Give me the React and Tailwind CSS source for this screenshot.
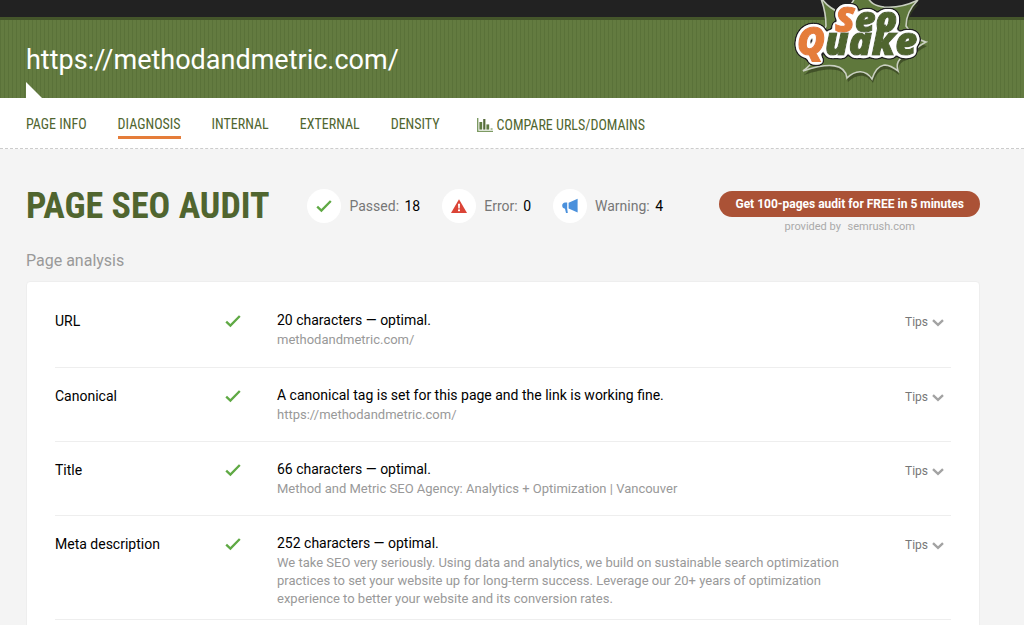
import React from "react";

const navItems = [
  { label: "Page info", active: false },
  { label: "Diagnosis", active: true },
  { label: "Internal", active: false },
  { label: "External", active: false },
  { label: "Density", active: false },
];

const rows = [
  {
    name: "URL",
    result: "20 characters — optimal.",
    detail: "methodandmetric.com/",
  },
  {
    name: "Canonical",
    result: "A canonical tag is set for this page and the link is working fine.",
    detail: "https://methodandmetric.com/",
  },
  {
    name: "Title",
    result: "66 characters — optimal.",
    detail: "Method and Metric SEO Agency: Analytics + Optimization | Vancouver",
  },
  {
    name: "Meta description",
    result: "252 characters — optimal.",
    detail:
      "We take SEO very seriously. Using data and analytics, we build on sustainable search optimization practices to set your website up for long-term success. Leverage our 20+ years of optimization experience to better your website and its conversion rates.",
  },
];

function CheckIcon() {
  return (
    <svg className="w-4 h-4" viewBox="0 0 16 16" fill="none" aria-hidden="true">
      <path d="M1.2 8.6 5.4 12.6 14.8 3" stroke="#5fa944" strokeWidth="2.3" />
    </svg>
  );
}

function ErrorIcon() {
  return (
    <svg className="w-4 h-4" viewBox="0 0 16 16" aria-hidden="true">
      <path d="M8 1.2 16 15H0Z" fill="#db4437" />
      <path d="M7 5.8h2l-.3 4.6H7.3Z" fill="#fff" />
      <rect x="7" y="11.4" width="2" height="1.8" fill="#fff" />
    </svg>
  );
}

function WarningIcon() {
  return (
    <svg className="w-4 h-4" viewBox="0 0 16 16" fill="#4a90dc" aria-hidden="true">
      <path d="M15.6.8V14.4L6.6 10.6V4.8Z" />
      <path d="M3.2 4.6H5.2V10.4L5.8 15H4L3 10.8C1.2 10.6.2 9.4.2 7.6S1.4 4.8 3.2 4.6Z" />
    </svg>
  );
}

function ChartIcon() {
  return (
    <svg className="w-4 h-4" viewBox="0 0 16 16" fill="#7d9a63" aria-hidden="true">
      <path d="M0 1h1.4v12.8H16V15H0Z" />
      <path d="M2.4 5h2.8v7.6H2.4Z" fill="#5f7a42" />
      <path d="M6.2 2h2.2v10.6H6.2Z" fill="#55693a" />
      <path d="M9.4 7.4h2.8v5.2H9.4Z" fill="#5f7a42" />
      <path d="M13.6 11.4h2v1.2h-2Z" />
    </svg>
  );
}

function Chevron() {
  return (
    <svg className="w-3 h-3" viewBox="0 0 12 12" fill="none" aria-hidden="true">
      <path d="M1 4.2 6 8.8l5-4.6" stroke="#a3a3a3" strokeWidth="2.4" />
    </svg>
  );
}

const burst =
  "M28 -4 C34 6 44 12 50 12 C58 6 62 2 64 -6 L74 -6 C78 4 84 6 92 7 C104 8 116 5 126 0 C118 8 114 16 114 26 C120 36 126 40 134 42 C126 46 120 52 114 56 C106 58 104 64 106 71 C96 63 86 61 80 79 C74 70 64 69 55 78 C53 64 38 62 11 71 C20 64 24 60 22 50 L34 26 C34 14 32 6 28 -4Z";

function Logo() {
  return (
    <svg className="w-36 h-[90px]" viewBox="0 0 144 90" role="img" aria-label="SeoQuake">
      <defs>
        {/* rounded white outline with a dark one around it */}
        <filter id="outline" x="-20" y="-20" width="184" height="130" filterUnits="userSpaceOnUse">
          <feGaussianBlur in="SourceAlpha" stdDeviation="2" result="b1" />
          <feComponentTransfer in="b1" result="a1">
            <feFuncA type="linear" slope="14" intercept="-1" />
          </feComponentTransfer>
          <feGaussianBlur in="a1" stdDeviation="1.3" result="b2" />
          <feComponentTransfer in="b2" result="a2">
            <feFuncA type="linear" slope="10" intercept="-0.6" />
          </feComponentTransfer>
          <feFlood floodColor="#fff" result="white" />
          <feComposite in="white" in2="a1" operator="in" result="inner" />
          <feFlood floodColor="#222" result="dark" />
          <feComposite in="dark" in2="a2" operator="in" result="outer" />
          <feMerge>
            <feMergeNode in="outer" />
            <feMergeNode in="inner" />
            <feMergeNode in="SourceGraphic" />
          </feMerge>
        </filter>
      </defs>
      <path d={burst} fill="#34411f" opacity="0.7" transform="translate(1 4)" />
      <path d={burst} fill="#5f783c" stroke="#c9cfc0" strokeWidth="1.6" />
      <g
        filter="url(#outline)"
        fontFamily="'Open Sans', sans-serif"
        fontWeight="800"
        fontStyle="italic"
        strokeWidth="1.2"
      >
        <text x="43" y="32" fontSize="36" fill="#e57d3a" stroke="#e57d3a">
          S<tspan fill="#50652f" stroke="#50652f">eo</tspan>
        </text>
        <text x="5" y="55" fontSize="38" fill="#e57d3a" stroke="#e57d3a">
          Q<tspan fill="#50652f" stroke="#50652f">uake</tspan>
        </text>
      </g>
    </svg>
  );
}

function Stat({ icon, label, value }) {
  return (
    <div className="flex items-center gap-2">
      <span className="flex items-center justify-center w-[34px] h-[34px] rounded-full bg-white">{icon}</span>
      <span className="text-[#777]">
        {label}: <span className="ml-0.5 text-black">{value}</span>
      </span>
    </div>
  );
}

function App() {
  return (
    <div className="min-h-screen bg-[#f4f4f4] font-['Roboto',sans-serif] text-black">
      <header className="relative">
        <div className="h-[17px] bg-[#222]"></div>
        <div className="relative flex items-center h-[81px] pt-0.5 pl-[26px] border-t-3 border-[#45562b] bg-[#60783d] bg-[repeating-linear-gradient(90deg,#5a7239_0px,#5a7239_1px,#637b40_1px,#637b40_4px)]">
          <h1 className="text-[27px] leading-8 text-white">https://methodandmetric.com/</h1>
          <span className="absolute left-[26px] bottom-0 w-4 h-4 bg-white [clip-path:polygon(0_0,100%_100%,0_100%)]"></span>
        </div>
        <div className="absolute top-0 right-[88px]">
          <Logo />
        </div>
      </header>

      <nav className="flex items-start gap-[31px] h-[51px] px-[26px] pt-4 bg-white border-b border-dashed border-[#ccc] font-['Roboto_Condensed','Liberation_Sans_Narrow',sans-serif] text-[14px] leading-5 uppercase text-[#50652f]">
        {navItems.map((item) => (
          <a
            key={item.label}
            href="#"
            className={
              item.active
                ? "pb-0.5 border-b-3 border-[#e57d3a]"
                : "pb-0.5 border-b-3 border-transparent"
            }
          >
            {item.label}
          </a>
        ))}
        <a href="#" className="flex items-center gap-1 pt-px ml-1.5">
          <ChartIcon />
          Compare URLs/Domains
        </a>
      </nav>

      <main className="pl-[26px] pr-11">
        <div className="flex items-start justify-between pt-[33px]">
          <div className="flex items-center gap-[38px]">
            <h2 className="font-['Roboto_Condensed','Liberation_Sans_Narrow',sans-serif] font-bold text-[36px] leading-12 uppercase text-[#50652f]">
              Page SEO Audit
            </h2>
            <div className="flex items-center gap-[22px] text-[14px]">
              <Stat icon={<CheckIcon />} label="Passed" value="18" />
              <Stat icon={<ErrorIcon />} label="Error" value="0" />
              <Stat icon={<WarningIcon />} label="Warning" value="4" />
            </div>
          </div>
          <div className="flex flex-col items-center pt-[9px]">
            <button
              type="button"
              className="h-[26px] px-4 rounded-full bg-[#ab5236] text-[12px] font-bold text-white"
            >
              Get 100-pages audit for FREE in 5 minutes
            </button>
            <p className="text-[11px] leading-5 text-[#aaa]">
              provided by{" "}
              <a href="#" className="ml-1">
                semrush.com
              </a>
            </p>
          </div>
        </div>

        <h3 className="mt-3 mb-2 text-[16px] leading-6 text-[#999]">Page analysis</h3>

        <section className="px-7 pt-[11px] pb-6 bg-white border border-[#eee] rounded-sm">
          <table className="w-full text-left text-[14px]">
            <tbody>
              {rows.map((row) => (
                <tr key={row.name} className="align-top border-b border-[#eee]">
                  <th scope="row" className="w-[170px] h-[74px] pt-[18px] font-normal leading-5">
                    {row.name}
                  </th>
                  <td className="w-[52px] pt-5">
                    <CheckIcon />
                  </td>
                  <td className="pt-[17px] pb-[11px]">
                    <p className="leading-[21px]">{row.result}</p>
                    <p className="max-w-[570px] text-[13px] leading-[18px] text-[#999]">{row.detail}</p>
                  </td>
                  <td className="w-[46px] pt-[19px]">
                    <button type="button" className="flex items-center gap-1 text-[12px] leading-5 text-[#777]">
                      Tips
                      <Chevron />
                    </button>
                  </td>
                </tr>
              ))}
            </tbody>
          </table>
        </section>
      </main>
    </div>
  );
}

export default App;
